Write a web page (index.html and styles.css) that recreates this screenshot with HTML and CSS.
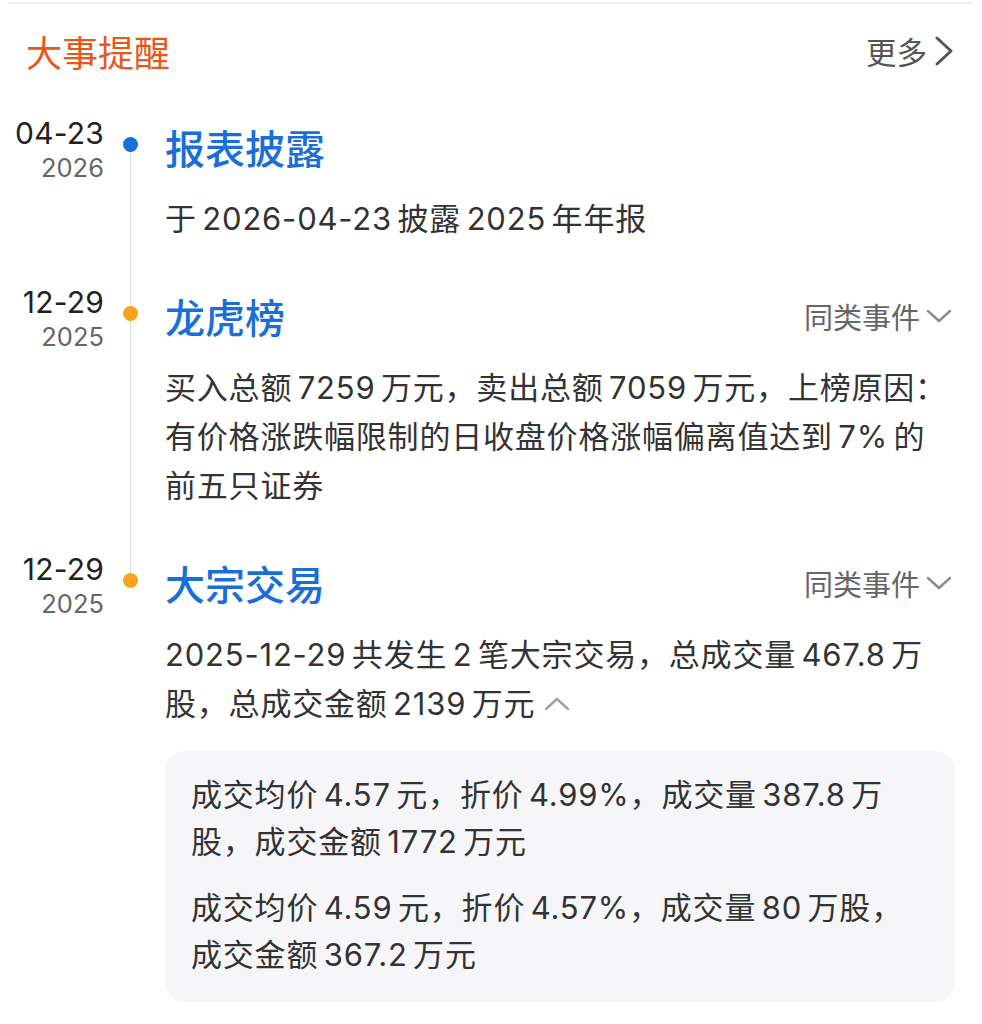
FILE: index.html
```html
<!DOCTYPE html>
<html lang="zh-CN">
<head>
<meta charset="utf-8">
<title>大事提醒</title>
<link rel="stylesheet" href="styles.css">
</head>
<body>
<section class="card">
  <div class="header">
    <h2 class="title">大事提醒</h2>
    <a class="more">更多<svg class="chev-right" viewBox="0 0 20 30" width="20" height="30"><path d="M3 2 L17 15 L3 28"/></svg></a>
  </div>
  <div class="timeline">
    <div class="item">
      <div class="date"><div class="md">04-23</div><div class="yr">2026</div></div>
      <div class="rail"><span class="seg seg-top hidden"></span><span class="dot dot-blue"></span><span class="seg seg-bottom"></span></div>
      <div class="content">
        <div class="head"><span class="ev-title">报表披露</span></div>
        <p class="desc">于 2026-04-23 披露 2025 年年报</p>
      </div>
    </div>
    <div class="item">
      <div class="date"><div class="md">12-29</div><div class="yr">2025</div></div>
      <div class="rail"><span class="seg seg-top"></span><span class="dot dot-orange"></span><span class="seg seg-bottom"></span></div>
      <div class="content">
        <div class="head"><span class="ev-title">龙虎榜</span><span class="similar">同类事件<svg class="chev-down" viewBox="0 0 26 14" width="26" height="14"><path d="M2 2 L13 12 L24 2"/></svg></span></div>
        <p class="desc">买入总额 7259 万元，卖出总额 7059 万元，上榜原因：有价格涨跌幅限制的日收盘价格涨幅偏离值达到 7% 的前五只证券</p>
      </div>
    </div>
    <div class="item last">
      <div class="date"><div class="md">12-29</div><div class="yr">2025</div></div>
      <div class="rail"><span class="seg seg-top"></span><span class="dot dot-orange"></span><span class="seg seg-bottom hidden"></span></div>
      <div class="content">
        <div class="head"><span class="ev-title">大宗交易</span><span class="similar">同类事件<svg class="chev-down" viewBox="0 0 26 14" width="26" height="14"><path d="M2 2 L13 12 L24 2"/></svg></span></div>
        <p class="desc">2025-12-29 共发生 2 笔大宗交易，总成交量 467.8 万股，总成交金额 2139 万元<svg class="chev-up" viewBox="0 0 28 14" width="28" height="14"><path d="M3 12 L14 2 L25 12"/></svg></p>
        <div class="details">
          <p class="detail">成交均价 4.57 元，折价 4.99%，成交量 387.8 万股，成交金额 1772 万元</p>
          <p class="detail">成交均价 4.59 元，折价 4.57%，成交量 80 万股，成交金额 367.2 万元</p>
        </div>
      </div>
    </div>
  </div>
</section>
</body>
</html>
```
FILE: styles.css
```css
* { box-sizing: border-box; }
html, body { background: #ffffff; }
body {
  margin: 0;
  font-family: "Inter", "Noto Sans CJK SC", sans-serif;
  color: #333333;
}
.card {
  margin: 2px 9px 0 8px;
  border-top: 2px solid #eeeeee;
  padding-bottom: 20px;
}
.header {
  display: flex;
  justify-content: space-between;
  align-items: center;
  height: 48px;
  margin: 23px 18px 0 18px;
}
.title {
  margin: 0;
  font-family: "Noto Sans CJK SC", sans-serif;
  font-size: 36px;
  font-weight: 400;
  line-height: 48px;
  color: #e6581a;
}
.more {
  display: flex;
  align-items: center;
  font-family: "Noto Sans CJK SC", sans-serif;
  font-size: 30.5px;
  line-height: 48px;
  color: #555555;
}
.chev-right { margin-left: 7px; margin-right: 1px; }
.chev-right path { fill: none; stroke: #555555; stroke-width: 3; stroke-linecap: round; stroke-linejoin: round; }
.timeline { margin-top: 41px; }
.item {
  display: grid;
  grid-template-columns: 96px 61px 1fr;
  padding-right: 18px;
}
.date { text-align: right; }
.md { font-size: 30px; line-height: 34px; color: #222222; letter-spacing: 0.2px; }
.yr { font-size: 25.5px; line-height: 36px; color: #666666; letter-spacing: 0; }
.rail {
  display: flex;
  flex-direction: column;
  align-items: center;
  width: 15px;
  margin-left: 19px;
}
.seg { width: 1px; background: #dcdcdc; }
.seg-top { height: 21px; flex: none; }
.seg-bottom { flex: 1; }
.seg.hidden { background: transparent; }
.dot { width: 15px; height: 15px; border-radius: 50%; flex: none; }
.dot-blue { background: #1a6fd8; }
.dot-orange { background: #f7a41c; }
.content { min-width: 0; padding-bottom: 42px; }
.item.last .content { padding-bottom: 0; }
.head {
  display: flex;
  justify-content: space-between;
  align-items: center;
  height: 56px;
  margin-top: 3px;
}
.ev-title {
  font-family: "Noto Sans CJK SC", sans-serif;
  font-size: 40px;
  font-weight: 500;
  line-height: 56px;
  color: #1a6ed8;
}
.similar {
  display: flex;
  align-items: center;
  font-family: "Noto Sans CJK SC", sans-serif;
  font-size: 29px;
  line-height: 40px;
  color: #666666;
  margin-right: 3px;
}
.chev-down { margin-left: 6px; }
.chev-down path, .chev-up path { fill: none; stroke: #8a8a8a; stroke-width: 2.4; stroke-linecap: round; stroke-linejoin: round; }
.chev-up { margin-left: 8px; vertical-align: 4px; }
.chev-up path { stroke: #a0a0a0; }
.desc {
  margin: 19px 0 0 0;
  font-size: 31px;
  line-height: 49px;
  letter-spacing: 0.8px;
  word-spacing: -4px;
  color: #333333;
}
.details {
  margin-top: 23px;
  background: #f6f6f8;
  border-radius: 20px;
  padding: 20px 24px 24px 26px;
  display: flex;
  flex-direction: column;
  gap: 19px;
}
.detail {
  margin: 0;
  font-size: 31px;
  line-height: 47px;
  letter-spacing: 0.8px;
  word-spacing: -4px;
  color: #333333;
}
```
